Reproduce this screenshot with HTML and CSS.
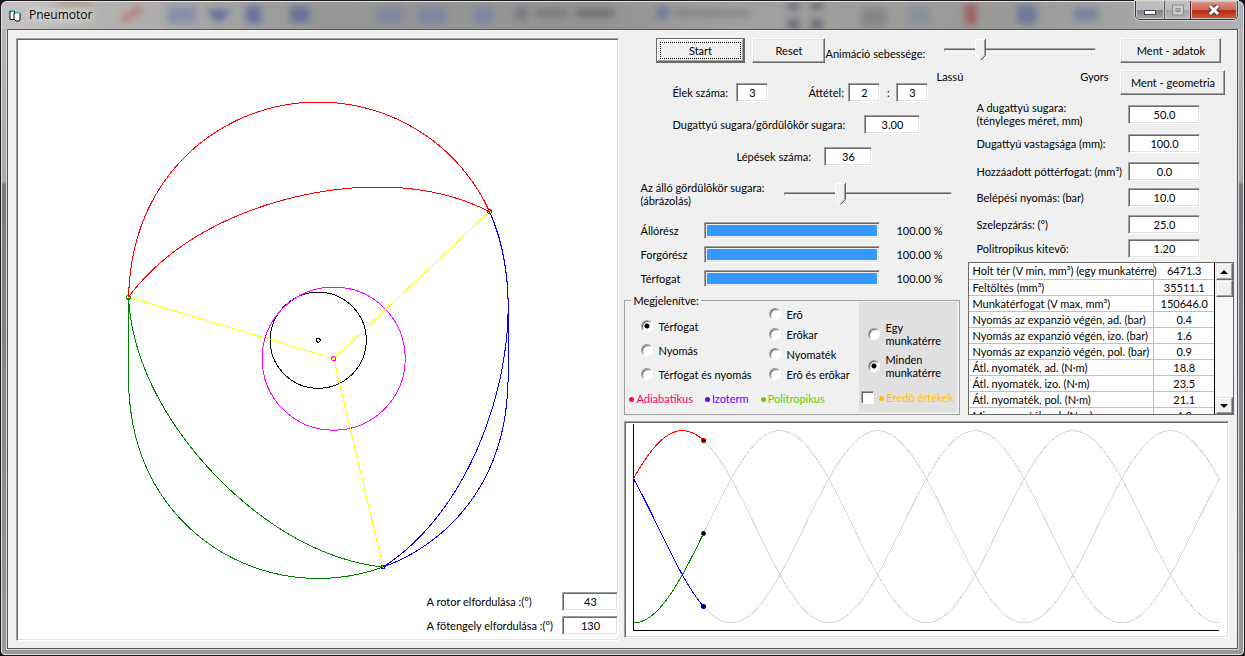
FILE: index.html
```html
<!DOCTYPE html>
<html lang="hu">
<head>
    <meta charset="UTF-8">
    <meta name="viewport" content="width=device-width, initial-scale=1.0">
    <title>Pneumotor</title>
    <link rel="stylesheet" href="styles.css">
</head>
<body>
    <div class="window">
        <header class="titlebar">
            <svg class="glass" width="1230" height="28" viewBox="0 0 1230 28" aria-hidden="true">
                <defs>
                    <filter id="soft" x="-5%" y="-50%" width="110%" height="200%"><feGaussianBlur stdDeviation="4"/></filter>
                </defs>
                <g filter="url(#soft)">
                    <rect x="34" y="-4" width="36" height="7" fill="#a8804a"/>
                    <path d="M102 20l20-14" stroke="#c05a48" stroke-width="7"/>
                    <rect x="148" y="4" width="30" height="18" fill="#6f7fa8"/>
                    <path d="M188 8h28l-14 14z" fill="#2f4a94"/>
                    <rect x="230" y="4" width="16" height="18" fill="#3d5596"/>
                    <rect x="276" y="5" width="20" height="16" fill="#3f5797"/>
                    <rect x="366" y="5" width="28" height="18" fill="#7280a5"/>
                    <rect x="408" y="5" width="30" height="18" fill="#7280a5"/>
                    <rect x="466" y="5" width="20" height="18" fill="#6f7ea8"/>
                    <rect x="510" y="6" width="12" height="12" fill="#5f6474"/>
                    <rect x="530" y="8" width="34" height="7" fill="#5f6062"/>
                    <rect x="572" y="8" width="40" height="7" fill="#4f5052"/>
                    <rect x="656" y="5" width="12" height="12" fill="#4c629a"/>
                    <rect x="674" y="8" width="80" height="7" fill="#717273"/>
                    <rect x="792" y="0" width="12" height="8" fill="#3f4658"/>
                    <rect x="792" y="18" width="12" height="10" fill="#3f4658"/>
                    <rect x="816" y="0" width="12" height="8" fill="#3f4658"/>
                    <rect x="816" y="18" width="12" height="10" fill="#3f4658"/>
                    <rect x="868" y="6" width="26" height="20" fill="#74757a"/>
                    <rect x="916" y="4" width="24" height="20" fill="#8088a0"/>
                    <rect x="976" y="2" width="12" height="22" fill="#a03c3c"/>
                    <rect x="1030" y="3" width="20" height="20" fill="#4f6498"/>
                    <rect x="1088" y="6" width="26" height="14" fill="#5e709c"/>
                </g>
            </svg>
            <svg class="app-icon" width="13" height="13" viewBox="0 0 13 13" aria-hidden="true">
                <path d="M1 2h4l1 1v7l-1 .5H1z" fill="#fff" stroke="#000"/>
                <path d="M5 4l5-.5 1 1V11l-1 1H7l-2-2z" fill="#fff" stroke="#000"/>
                <path d="M1 1.500h4M6 3.500h5" stroke="#1cc"/>
            </svg>
            <h1>Pneumotor</h1>
            <div class="window-controls">
                <button type="button" class="min" aria-label="Minimize"><svg width="14" height="12" viewBox="0 0 14 12"><rect x="1.500" y="6.500" width="11" height="4" fill="#fff" stroke="#44485a"/></svg></button>
                <button type="button" class="max" aria-label="Maximize" disabled><svg width="12" height="12" viewBox="0 0 12 12"><path d="M2 2.500h8v7H2z" fill="none" stroke="#ccc" stroke-width="3"/><path d="M.500 1h11v10H.500zM4 4.500h4v3H4z" fill="none" stroke="#8b8b8b"/></svg></button>
                <button type="button" class="close" aria-label="Close"><svg width="14" height="12" viewBox="0 0 14 12"><path d="M3 2l8 8M11 2l-8 8" stroke="#43343c" stroke-width="5"/><path d="M3 2l8 8M11 2l-8 8" stroke="#fff" stroke-width="3"/></svg></button>
            </div>
        </header>

        <main class="client">
            <section class="stage sunken">
                <svg id="engine" viewBox="0 0 601 601"></svg>
                <div class="readouts">
                    <label for="rotor">A rotor elfordulása :(°)</label>
                    <input type="text" id="rotor" value="43">
                    <label for="shaft">A fötengely elfordulása :(°)</label>
                    <input type="text" id="shaft" value="130">
                </div>
            </section>

            <section class="side">
                <div class="panels">
                    <div class="setup">
                        <div class="row actions">
                            <button type="button" class="btn default">Start</button>
                            <button type="button" class="btn">Reset</button>
                            <label for="speed">Animáció sebessége:</label>
                        </div>
                        <div class="row ratio">
                            <label for="edges">Élek száma:</label>
                            <input type="text" id="edges" value="3">
                            <label for="gearA" class="gear">Áttétel:</label>
                            <input type="text" id="gearA" value="2">
                            <span class="colon">:</span>
                            <input type="text" id="gearB" value="3" aria-label="Áttétel">
                        </div>
                        <div class="row radius">
                            <label for="radiusRatio">Dugattyú sugara/gördülõkör sugara:</label>
                            <input type="text" id="radiusRatio" value="3.00">
                        </div>
                        <div class="row steps">
                            <label for="steps">Lépések száma:</label>
                            <input type="text" id="steps" value="36">
                        </div>
                        <div class="row zoom">
                            <label for="zoom">Az álló gördülõkör sugara:<br>(ábrázolás)</label>
                            <input type="range" id="zoom" min="0" max="100" value="32">
                        </div>
                        <div class="bars">
                            <label for="stator">Állórész</label>
                            <progress id="stator" max="100" value="100"></progress>
                            <output>100.00 %</output>
                            <label for="rotorBar">Forgórész</label>
                            <progress id="rotorBar" max="100" value="100"></progress>
                            <output>100.00 %</output>
                            <label for="volume">Térfogat</label>
                            <progress id="volume" max="100" value="100"></progress>
                            <output>100.00 %</output>
                        </div>
                        <fieldset>
                            <legend>Megjelenítve:</legend>
                            <div class="display">
                                <div class="kinds">
                                    <div class="options wide">
                                        <label><input type="radio" name="kind" checked>Térfogat</label>
                                        <label><input type="radio" name="kind">Nyomás</label>
                                        <label><input type="radio" name="kind">Térfogat és nyomás</label>
                                    </div>
                                    <div class="options">
                                        <label><input type="radio" name="kind">Erõ</label>
                                        <label><input type="radio" name="kind">Erõkar</label>
                                        <label><input type="radio" name="kind">Nyomaték</label>
                                        <label><input type="radio" name="kind">Erõ és erõkar</label>
                                    </div>
                                    <div class="keys">
                                        <span class="key adiabatic">Adiabatikus</span>
                                        <span class="key isotherm">Izoterm</span>
                                        <span class="key polytropic">Politropikus</span>
                                    </div>
                                </div>
                                <div class="chambers">
                                    <label><input type="radio" name="chamber"><span>Egy<br>munkatérre</span></label>
                                    <label><input type="radio" name="chamber" checked><span>Minden<br>munkatérre</span></label>
                                    <label class="result"><input type="checkbox"><span class="key total">Eredõ értékek</span></label>
                                </div>
                            </div>
                        </fieldset>
                    </div>

                    <div class="data">
                        <div class="tools">
                            <div class="speed">
                                <input type="range" id="speed" min="0" max="100" value="21">
                                <div class="ends"><span>Lassú</span><span>Gyors</span></div>
                            </div>
                            <div class="save">
                                <button type="button" class="btn">Ment - adatok</button>
                                <button type="button" class="btn">Ment - geometria</button>
                            </div>
                        </div>
                        <div class="params">
                            <label for="pistonRadius">A dugattyú sugara:<br>(tényleges méret, mm)</label>
                            <input type="text" id="pistonRadius" value="50.0">
                            <label for="thickness">Dugattyú vastagsága (mm):</label>
                            <input type="text" id="thickness" value="100.0">
                            <label for="extra">Hozzáadott póttérfogat: (mm³)</label>
                            <input type="text" id="extra" value="0.0">
                            <label for="inlet">Belépési nyomás: (bar)</label>
                            <input type="text" id="inlet" value="10.0">
                            <label for="valve">Szelepzárás: (°)</label>
                            <input type="text" id="valve" value="25.0">
                            <label for="exponent">Politropikus kitevõ:</label>
                            <input type="text" id="exponent" value="1.20">
                        </div>
                        <div class="results">
                            <div class="rows">
                                <table>
                                    <tr><td>Holt tér (V min, mm³) (egy munkatérre)</td><td>6471.3</td></tr>
                                    <tr><td>Feltöltés (mm³)</td><td>35511.1</td></tr>
                                    <tr><td>Munkatérfogat (V max, mm³)</td><td>150646.0</td></tr>
                                    <tr><td>Nyomás az expanzió végén, ad. (bar)</td><td>0.4</td></tr>
                                    <tr><td>Nyomás az expanzió végén, izo. (bar)</td><td>1.6</td></tr>
                                    <tr><td>Nyomás az expanzió végén, pol. (bar)</td><td>0.9</td></tr>
                                    <tr><td>Átl. nyomaték, ad. (N·m)</td><td>18.8</td></tr>
                                    <tr><td>Átl. nyomaték, izo. (N·m)</td><td>23.5</td></tr>
                                    <tr><td>Átl. nyomaték, pol. (N·m)</td><td>21.1</td></tr>
                                    <tr><td>Min. nyomaték, ad. (N·m)</td><td>4.3</td></tr>
                                </table>
                            </div>
                            <div class="scrollbar">
                                <button type="button" aria-label="Fel"><svg width="8" height="4" viewBox="0 0 8 4"><path d="M0 4l4-4 4 4z"/></svg></button>
                                <div class="thumb"></div>
                                <button type="button" class="down" aria-label="Le"><svg width="8" height="4" viewBox="0 0 8 4"><path d="M0 0h8l-4 4z"/></svg></button>
                            </div>
                        </div>
                    </div>
                </div>
                <div class="chart sunken">
                    <svg id="chart" viewBox="0 0 602 215"></svg>
                </div>
            </section>
        </main>
    </div>
    <script src="script.js"></script>
</body>
</html>
```
FILE: styles.css
```css
* {
    box-sizing: border-box;
}
body {
    margin: 0;
    background-color: #17151b;
    color: #000;
    font-family: Lato, "Liberation Sans", Arial, sans-serif;
    font-size: 11px;
    line-height: 13px;
}
button,
input {
    font: inherit;
    color: inherit;
    margin: 0;
}
.window {
    display: flex;
    flex-direction: column;
    min-height: 100vh;
    padding: 0 6px 6px;
    border: 1px solid #1d1a20;
    border-radius: 7px 7px 5px 5px;
    background: linear-gradient(to bottom, #b9b6b6 0, #aaa 180px, #77797f 184px, #85878c 60%, #999 100%);
    box-shadow: inset 0 0 0 1px #e4e2e2;
}

/* title bar */
.titlebar {
    position: relative;
    display: flex;
    align-items: flex-start;
    height: 28px;
    margin: 0 -5px;
    flex: none;
}
.titlebar::before {
    content: "";
    position: absolute;
    inset: 1px 0 0;
    border-radius: 6px 6px 0 0;
    background: linear-gradient(to right, #c4c2c2 0, #b5b3b2 100px, #979797 320px, #939392 600px, #a2a1a0 740px, #9a9998 1000px, #b0b0b0 100%);
}
.glass {
    position: absolute;
    top: 1px;
    left: 0;
    height: 27px;
    max-width: 100%;
    opacity: 0.6;
}
.app-icon {
    position: relative;
    margin: 8px 7px 0 7px;
}
.titlebar h1 {
    position: relative;
    margin: 6px 0 0;
    font-family: "Open Sans", "Noto Sans", sans-serif;
    font-size: 12px;
    font-weight: 400;
    line-height: 16px;
    text-shadow: 0 0 8px #fff, 0 0 10px #fff;
}
.window-controls {
    position: relative;
    display: flex;
    height: 19px;
    margin-left: auto;
    margin-right: 5px;
    border: 1px solid #38353a;
    border-top: 0;
    border-radius: 0 0 5px 5px;
    box-shadow: 0 0 0 1px #d5d5d5;
    overflow: hidden;
}
.window-controls button {
    display: flex;
    align-items: center;
    justify-content: center;
    padding: 0;
    border: 0;
    box-shadow: inset 0 0 0 1px #c9c9c9;
}
.window-controls .min {
    width: 28px;
    background: linear-gradient(#bcbcbc 48%, #828282 50%, #a6a6a6);
}
.window-controls .max {
    width: 26px;
    border-left: 1px solid #5a5a5a;
    background: linear-gradient(#bdbdbd 48%, #a2a2a2 50%, #b8b8b8);
}
.window-controls .close {
    width: 47px;
    border-left: 1px solid #4a2020;
    background: linear-gradient(#dc9a8a 0, #cd6754 48%, #b62b14 52%, #d35a34 100%);
}

/* client area */
.client {
    flex: 1;
    display: grid;
    grid-template-columns: 603fr 609fr;
    gap: 5px;
    padding: 8px 3px 7px 8px;
    border: 1px solid #555;
    background-color: #f0f0f0;
    box-shadow: 0 0 0 1px #d8d8d8;
}
.sunken {
    border: 1px solid;
    border-color: #a0a0a0 #fff #fff #a0a0a0;
    background-color: #fff;
    box-shadow: inset 1px 1px 0 #696969, inset -1px -1px 0 #e3e3e3;
}
.stage {
    position: relative;
    display: flex;
    min-width: 0;
}
.stage svg,
.chart svg {
    flex: 1;
    display: block;
    min-width: 0;
    width: 100%;
    fill: none;
    shape-rendering: crispEdges;
}
.readouts {
    position: absolute;
    right: 0;
    bottom: 5px;
    display: grid;
    grid-template-columns: 136px 56px;
    row-gap: 5px;
    align-items: center;
}

/* controls */
input[type="text"] {
    height: 19px;
    padding: 0 2px;
    border: 1px solid;
    border-color: #a0a0a0 #fff #fff #a0a0a0;
    background-color: #fff;
    box-shadow: inset 1px 1px 0 #696969, inset -1px -1px 0 #e3e3e3;
    text-align: center;
    outline: 0;
}
.btn {
    height: 25px;
    padding: 0;
    border: 1px solid;
    border-color: #fff #696969 #696969 #fff;
    background-color: #f0f0f0;
    box-shadow: inset -1px -1px 0 #a0a0a0, inset 1px 1px 0 #e3e3e3;
}
.btn.default {
    border: 2px solid;
    border-color: #696969;
    border-top-width: 1px;
    border-left-width: 1px;
    box-shadow: inset 1px 1px 0 #fff, inset -1px -1px 0 #a0a0a0;
    outline: 1px dotted #000;
    outline-offset: -5px;
}
input[type="range"] {
    -webkit-appearance: none;
    appearance: none;
    height: 22px;
    background: transparent;
}
input[type="range"]::-webkit-slider-runnable-track {
    height: 4px;
    border: 1px solid;
    border-color: #a0a0a0 #fff #fff #a0a0a0;
    background: linear-gradient(#696969 1px, #e3e3e3 1px);
}
input[type="range"]::-webkit-slider-thumb {
    -webkit-appearance: none;
    width: 11px;
    height: 22px;
    margin-top: -10px;
    background: url("data:image/svg+xml,%3Csvg xmlns='http://www.w3.org/2000/svg' width='11' height='22'%3E%3Cpath d='M0 0h11v16l-5.500 6L0 16z' fill='%23f0f0f0'/%3E%3Cpath d='M.500 16V.500H10' fill='none' stroke='%23fff'/%3E%3Cpath d='M.500 16l5 5' fill='none' stroke='%23fff'/%3E%3Cpath d='M9.500 1v15l-4 4.500' fill='none' stroke='%23a0a0a0'/%3E%3Cpath d='M10.500 0v16.500l-5 5' fill='none' stroke='%23696969'/%3E%3C/svg%3E") no-repeat;
}
input[type="radio"] {
    -webkit-appearance: none;
    appearance: none;
    flex: none;
    width: 12px;
    height: 12px;
    border: 1px solid;
    border-color: #a0a0a0 #fff #fff #a0a0a0;
    border-radius: 50%;
    background-color: #fff;
    box-shadow: inset 1px 1px 0 #696969;
}
input[type="radio"]:checked {
    background-image: radial-gradient(circle at 50% 50%, #000 2px, transparent 3px);
}
input[type="checkbox"] {
    -webkit-appearance: none;
    appearance: none;
    flex: none;
    width: 13px;
    height: 13px;
    border: 1px solid;
    border-color: #a0a0a0 #fff #fff #a0a0a0;
    background-color: #fff;
    box-shadow: inset 1px 1px 0 #696969;
}
progress {
    -webkit-appearance: none;
    appearance: none;
    display: block;
    width: 176px;
    height: 17px;
    padding: 2px;
    border: 1px solid;
    border-color: #a0a0a0 #fff #fff #a0a0a0;
    background-color: #f0f0f0;
    box-shadow: inset 1px 1px 0 #696969, inset -1px -1px 0 #e3e3e3;
}
progress::-webkit-progress-bar {
    background-color: #f0f0f0;
}
progress::-webkit-progress-value {
    background-color: #3399ff;
}

/* right side */
.side {
    display: flex;
    flex-direction: column;
    min-width: 0;
}
.panels {
    display: grid;
    grid-template-columns: 336px 1fr;
    column-gap: 8px;
    height: 377px;
}
.row {
    display: flex;
    align-items: center;
}
.actions {
    padding-left: 32px;
    align-items: flex-start;
}
.actions .btn {
    width: 73px;
}
.actions .btn.default {
    width: 89px;
    margin-right: 7px;
}
.actions label {
    margin-top: 9px;
    white-space: nowrap;
}
.ratio {
    margin-top: 20px;
    padding-left: 48px;
}
.ratio label {
    width: 64px;
}
.ratio .gear {
    width: 40px;
    margin-left: 40px;
}
.ratio input {
    width: 32px;
}
.colon {
    width: 16px;
    text-align: center;
}
.radius {
    margin-top: 13px;
    padding-left: 48px;
}
.radius label {
    width: 192px;
}
.radius input {
    width: 56px;
}
.steps {
    margin-top: 13px;
    padding-left: 112px;
}
.steps label {
    width: 88px;
}
.steps input {
    width: 48px;
}
.zoom {
    margin-top: 15px;
    padding-left: 16px;
}
.zoom label {
    width: 144px;
}
.zoom input {
    width: 168px;
}
.bars {
    display: grid;
    grid-template-columns: 64px 192px 1fr;
    row-gap: 7px;
    align-items: center;
    margin-top: 15px;
    padding-left: 16px;
}
fieldset {
    min-width: 0;
    margin: 7px 0 0;
    padding: 0;
    border: 1px solid #a0a0a0;
}
legend {
    margin-left: 6px;
    padding: 0 2px;
}
.display {
    display: grid;
    grid-template-columns: 234px 1fr;
    height: 110px;
    margin: -5px 2px 2px 0;
}
.kinds {
    display: grid;
    grid-template-columns: 128px 1fr;
    grid-template-rows: 82px 1fr;
    padding-left: 16px;
}
.options {
    display: flex;
    flex-direction: column;
    justify-content: flex-end;
}
.options label,
.chambers label {
    display: flex;
    align-items: center;
    gap: 5px;
    height: 20px;
}
.options.wide {
    margin-bottom: -2px;
}
.options.wide label {
    height: 24px;
}
.keys {
    grid-column: 1 / 3;
    display: flex;
    align-items: center;
    gap: 12px;
    margin-left: -12px;
}
.key::before {
    content: "";
    display: inline-block;
    width: 5px;
    height: 5px;
    margin-right: 2px;
    border-radius: 50%;
    background-color: currentColor;
    vertical-align: 1px;
}
.adiabatic {
    color: #ff0066;
}
.isotherm {
    color: #6600ff;
}
.polytropic {
    color: #66cc00;
}
.total {
    color: #ffc000;
}
.chambers {
    display: flex;
    flex-direction: column;
    padding: 16px 0 0 9px;
    background-color: #e0e0e0;
}
.chambers label {
    height: 32px;
}
.chambers .result {
    height: 30px;
    margin-left: -7px;
    white-space: nowrap;
}
.data {
    display: flex;
    flex-direction: column;
    min-width: 0;
    min-height: 0;
}
.tools {
    display: flex;
    gap: 12px;
    height: 62px;
    margin-left: -32px;
}
.speed {
    width: 172px;
    padding: 1px 0 0;
}
.speed input {
    display: block;
    width: 152px;
    margin-left: 8px;
}
.ends {
    display: flex;
    justify-content: space-between;
    margin-top: 9px;
}
.save {
    display: flex;
    flex-direction: column;
    align-items: flex-start;
    gap: 7px;
}
.save .btn {
    width: 101px;
}
.save .btn + .btn {
    width: 105px;
}
.params {
    display: grid;
    grid-template-columns: 152px 72px;
    grid-template-rows: 28px 30px 26px 26px 28px 20px;
    align-items: center;
    padding-left: 8px;
    white-space: nowrap;
}
.results {
    display: flex;
    height: 153px;
    margin-top: 4px;
    border: 1px solid #696969;
    background-color: #fff;
}
.rows {
    flex: 1;
    overflow: hidden;
    border-right: 1px solid #000;
}
table {
    width: 100%;
    border-collapse: collapse;
    table-layout: fixed;
}
td {
    height: 16px;
    padding: 0 0 0 3px;
    border-bottom: 1px solid #c0c0c0;
    line-height: 15px;
    white-space: nowrap;
}
td + td {
    width: 60px;
    padding: 0;
    border-left: 1px solid #c0c0c0;
    text-align: center;
}
.scrollbar {
    display: flex;
    flex-direction: column;
    width: 18px;
    padding-left: 1px;
    background-color: #f7f7f7;
}
.scrollbar button,
.thumb {
    width: 17px;
    height: 17px;
    padding: 0;
    border: 1px solid;
    border-color: #e3e3e3 #696969 #696969 #e3e3e3;
    background-color: #f0f0f0;
    box-shadow: inset -1px -1px 0 #a0a0a0, inset 1px 1px 0 #fff;
}
.scrollbar button {
    display: flex;
    align-items: center;
    justify-content: center;
}
.scrollbar .down {
    margin-top: auto;
}
.chart {
    display: flex;
    flex: 1;
    margin: 6px 5px 3px 0;
}
```
FILE: script.js
```js
const NS = 'http://www.w3.org/2000/svg';

function draw(svg, tag, attrs) {
    const el = document.createElementNS(NS, tag);
    for (const name in attrs) el.setAttribute(name, attrs[name]);
    svg.appendChild(el);
}

function curve(svg, from, to, fn, color) {
    const points = [];
    const n = 120;
    for (let i = 0; i <= n; i++) {
        points.push(fn(from + (to - from) * i / n).map(v => v.toFixed(2)).join(','));
    }
    draw(svg, 'polyline', { points: points.join(' '), stroke: color });
}

// engine: housing (epitrochoid), rotor flanks and pitch circles
const engine = document.getElementById('engine');
const R = 214;
const E = 24;
const CX = 301;
const CY = 301;
const rad = Math.PI / 180;
const turn = 130 / 3 * rad;
const third = 120 * rad;
const rx = CX - E * Math.cos(3 * turn);
const ry = CY + E * Math.sin(3 * turn);

function housing(t) {
    return [
        CX - E * Math.cos(3 * t) + R * Math.cos(t),
        CY + E * Math.sin(3 * t) - R * Math.sin(t)
    ];
}

// one flank of the rotor, v runs from 30 to 90 degrees
function flank(start) {
    const k = 3 * E * E / (2 * R);
    const a = start - 60 * rad;
    return v => {
        const s = E * Math.sqrt(1 - 9 * E * E / (R * R) * Math.sin(3 * v) ** 2);
        const x = R * Math.cos(2 * v) + k * (Math.cos(8 * v) - Math.cos(4 * v)) + s * (Math.cos(5 * v) + Math.cos(v));
        const y = R * Math.sin(2 * v) + k * (Math.sin(8 * v) + Math.sin(4 * v)) + s * (Math.sin(5 * v) - Math.sin(v));
        return [
            rx + x * Math.cos(a) - y * Math.sin(a),
            ry - x * Math.sin(a) - y * Math.cos(a)
        ];
    };
}

draw(engine, 'circle', { cx: CX, cy: CY, r: 48, stroke: '#000' });
draw(engine, 'circle', { cx: rx, cy: ry, r: 71.5, stroke: '#f0f' });
['#f00', '#008000', '#00f'].forEach((color, i) => {
    const t = turn + i * third;
    curve(engine, t, t + third, housing, color);
    curve(engine, 30 * rad, 90 * rad, flank(t), color);
    const [x, y] = housing(t);
    draw(engine, 'line', { x1: rx, y1: ry, x2: x, y2: y, stroke: '#ff0' });
});
['#b00000', '#008000', '#00f'].forEach((color, i) => {
    const [x, y] = housing(turn + i * third);
    draw(engine, 'circle', { cx: x, cy: y, r: 2, stroke: color });
});
draw(engine, 'circle', { cx: CX, cy: CY, r: 2, stroke: '#000' });
draw(engine, 'circle', { cx: rx, cy: ry, r: 2, stroke: '#f0f' });

// volume of the three chambers over two turns
const chart = document.getElementById('chart');
const X0 = 8.5;
const X1 = 594;
const NOW = 78.5;
const period = (X1 - X0) / 2;
const waves = [
    { color: '#f00', peak: X0 + period / 6 },
    { color: '#008000', peak: X0 + period / 2 },
    { color: '#00f', peak: X0 - period / 6 }
];
const volume = peak => x => [x, 104.5 - 96 * Math.cos(2 * Math.PI * (x - peak) / period)];

waves.forEach(w => curve(chart, NOW, X1, volume(w.peak), '#d8d8d8'));
draw(chart, 'path', { d: 'M8.5 2V208.5H594', stroke: '#000' });
waves.forEach(w => {
    curve(chart, X0, NOW, volume(w.peak), w.color);
    const [x, y] = volume(w.peak)(NOW);
    draw(chart, 'circle', { cx: x, cy: y, r: 2, stroke: w.color, fill: '#000' });
    draw(chart, 'circle', { cx: x, cy: y, r: 1.5, stroke: '#000' });
});
```
